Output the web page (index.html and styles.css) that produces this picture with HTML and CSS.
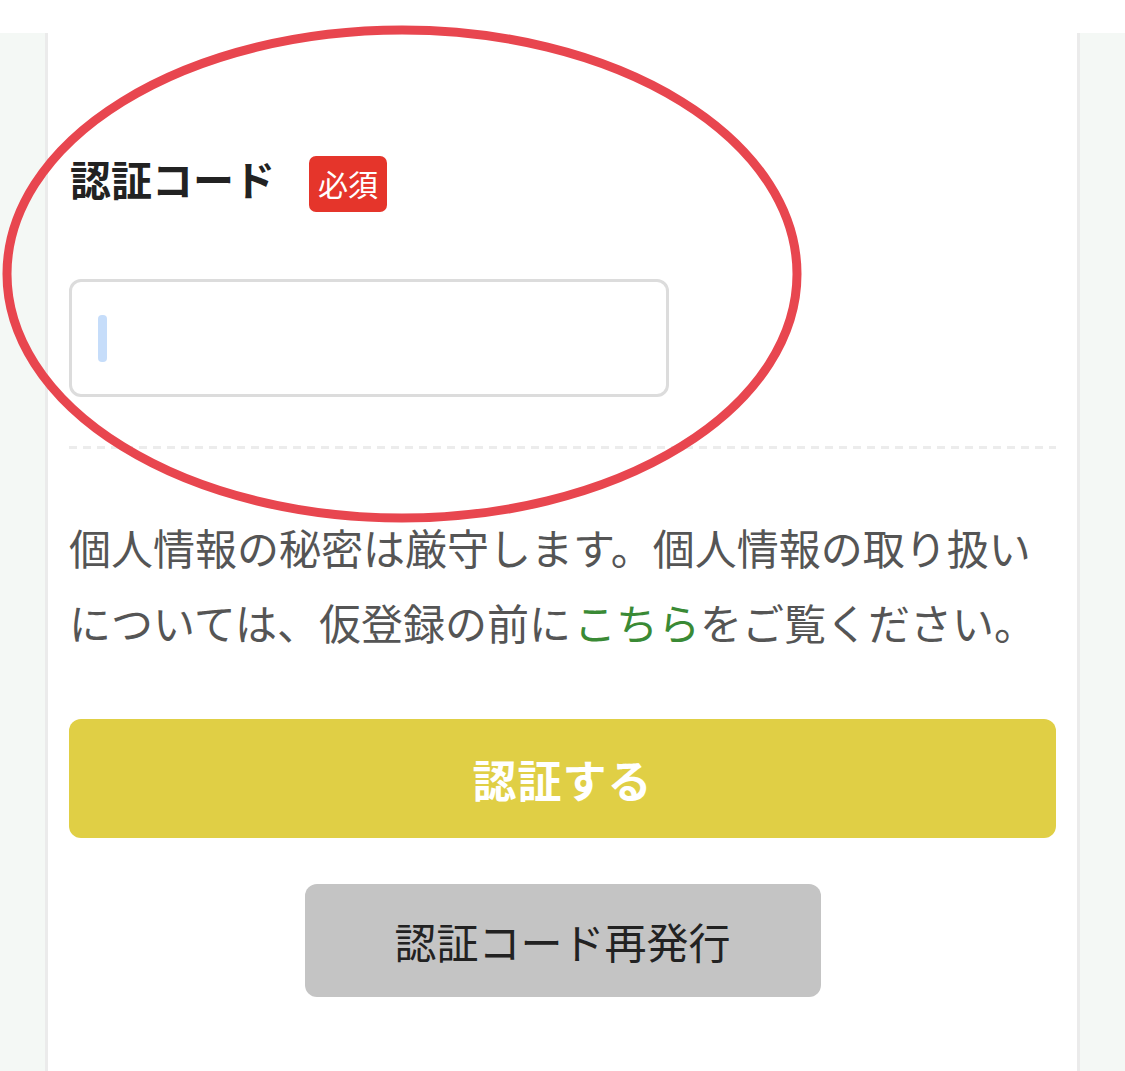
FILE: index.html
```html
<!DOCTYPE html>
<html lang="ja">
<head>
<meta charset="utf-8">
<link rel="stylesheet" href="styles.css">
</head>
<body>
<div class="topbar"></div>
<div class="page">
  <div class="card">
    <div class="label-row">
      <span class="label">認証コード</span>
      <span class="badge">必須</span>
    </div>
    <div class="input"><span class="caret"></span></div>
    <div class="dash"></div>
    <p class="note">個人情報の秘密は厳守します。個人情報の取り扱いについては、仮登録の前に<a class="link">こちら</a>をご覧ください。</p>
    <button class="btn-primary">認証する</button>
    <div class="btn-row"><button class="btn-secondary">認証コード再発行</button></div>
  </div>
</div>
<svg class="mark" width="1125" height="1071" viewBox="0 0 1125 1071">
  <ellipse cx="402" cy="274" rx="395" ry="244" fill="none" stroke="#e8464f" stroke-width="9"/>
</svg>
</body>
</html>
```

FILE: styles.css
```css
html, body {
  margin: 0;
  padding: 0;
  background: #ffffff;
  height: 1071px;
  overflow: hidden;
}
body {
  position: relative;
  font-family: "Noto Sans CJK JP", "Noto Sans", sans-serif;
}
.topbar {
  height: 33px;
  background: #ffffff;
}
.page {
  background: #f4f8f5;
  padding: 0 45px;
  height: 1038px;
}
.card {
  background: #ffffff;
  border-left: 3px solid #ebebeb;
  border-right: 3px solid #ebebeb;
  padding: 123px 21px 0;
  height: 1038px;
  box-sizing: border-box;
}
.label-row {
  display: flex;
  align-items: center;
  height: 56px;
}
.label {
  font-size: 41px;
  font-weight: 700;
  color: #222222;
  line-height: 56px;
  margin-left: 1px;
  margin-bottom: 12px;
}
.badge {
  margin-left: 34px;
  height: 56px;
  line-height: 54px;
  padding: 0 9px;
  background: #e5352b;
  color: #ffffff;
  font-size: 30px;
  border-radius: 7px;
}
.input {
  margin-top: 67px;
  width: 600px;
  height: 118px;
  box-sizing: border-box;
  border: 3px solid #dcdcdc;
  border-radius: 12px;
  display: flex;
  align-items: center;
  padding-left: 26px;
}
.caret {
  width: 9px;
  height: 47px;
  background: #c6ddfa;
  border-radius: 4px;
}
.dash {
  margin-top: 49px;
  height: 3px;
  background: repeating-linear-gradient(90deg, #ececec 0 8px, transparent 8px 14px);
}
.note {
  margin: 60px 0 0;
  font-size: 42px;
  line-height: 75px;
  color: #555555;
}
.link {
  color: #3a8a35;
  text-decoration: none;
  padding-left: 3px;
}
.btn-primary {
  display: block;
  margin-top: 60px;
  width: 100%;
  height: 119px;
  border: 0;
  border-radius: 12px;
  background: #e0cf45;
  color: #ffffff;
  font-family: inherit;
  font-size: 44px;
  font-weight: 700;
  letter-spacing: 1px;
}
.btn-row {
  display: flex;
  justify-content: center;
  margin-top: 46px;
}
.btn-secondary {
  width: 516px;
  height: 113px;
  border: 0;
  border-radius: 12px;
  background: #c4c4c4;
  color: #222222;
  font-family: inherit;
  font-size: 42px;
  font-weight: 400;
}
.mark {
  position: absolute;
  top: 0;
  left: 0;
  pointer-events: none;
}
```
